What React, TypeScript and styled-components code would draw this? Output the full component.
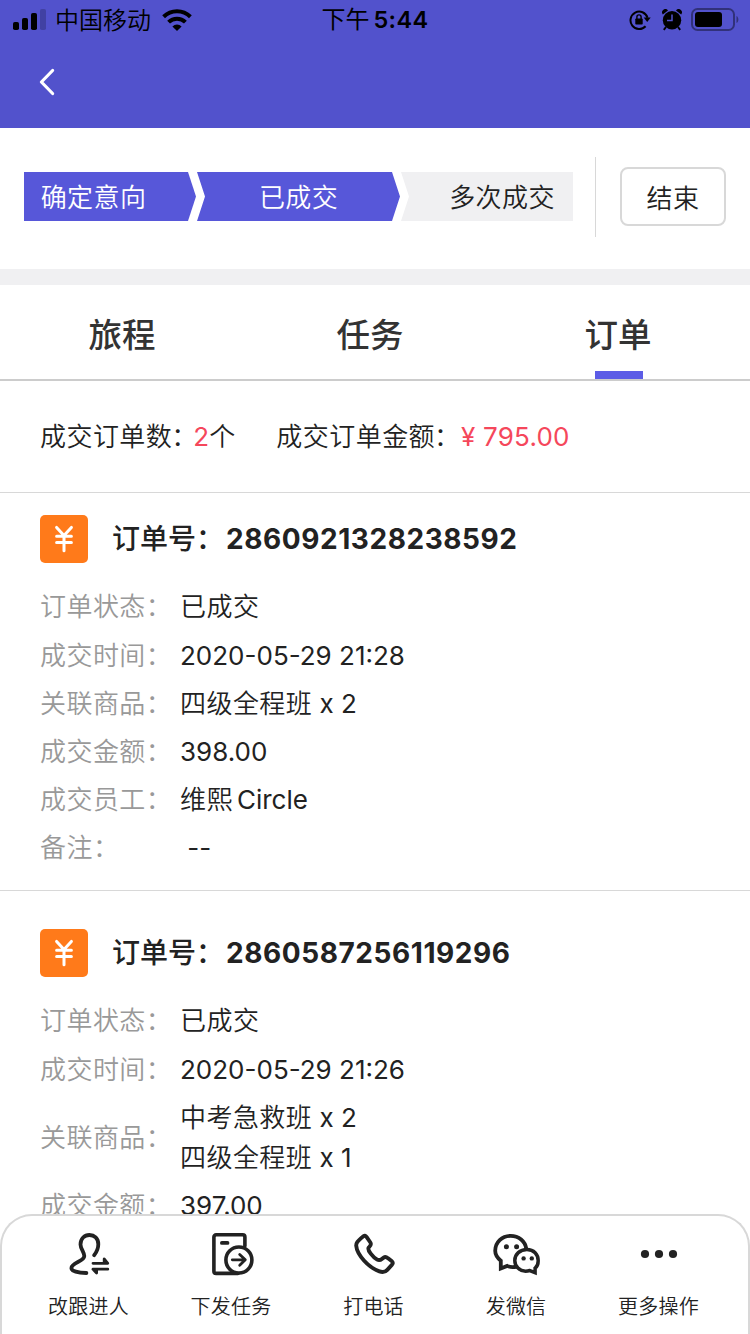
import React from 'react';
import styled, { createGlobalStyle, css } from 'styled-components';

const GlobalStyle = createGlobalStyle`
  * { box-sizing: border-box; }
  body {
    margin: 0;
    background: #fff;
    color: #222;
    font-family: Inter, 'Noto Sans CJK SC DemiLight', 'Noto Sans CJK SC', sans-serif;
    font-size: 26px;
    overflow: hidden;
  }
`;

const headingFont = css`
  font-family: Inter, 'Noto Sans CJK SC Medium', 'Noto Sans CJK SC', sans-serif;
  font-weight: 500;
`;

const Screen = styled.div`
  display: flex;
  flex-direction: column;
  width: 750px;
  height: 1334px;
  overflow: hidden;
`;

const Header = styled.header`
  height: 128px;
  flex: none;
  background: #5252cc;
`;

const StatusBar = styled.div`
  display: grid;
  grid-template-columns: 1fr auto 1fr;
  align-items: center;
  height: 40px;
  padding: 0 11px 0 13px;
  color: #000;
`;

const StatusGroup = styled.div<{ $end?: boolean }>`
  display: flex;
  align-items: center;
  justify-content: ${(p) => (p.$end ? 'flex-end' : 'flex-start')};
`;

const Carrier = styled.span`
  margin: 0 11px 0 9px;
  padding-top: 2px;
  font-size: 24px;
  line-height: 30px;
`;

const Clock = styled.span`
  margin-right: 2px;
  font-size: 23.5px;
  font-weight: 600;
  line-height: 30px;
  letter-spacing: 0.4px;
  white-space: nowrap;
`;

const ClockPrefix = styled.span`
  font-family: Inter, 'Noto Sans CJK SC', sans-serif;
  font-weight: 400;
  font-size: 24px;
  letter-spacing: 0;
  margin-right: 4px;
`;

const NavBar = styled.div`
  display: flex;
  align-items: center;
  height: 84px;
  padding-left: 38px;
`;

const Progress = styled.section`
  display: flex;
  flex: none;
  height: 141px;
  padding: 29px 24px 0;
`;

const Steps = styled.div`
  display: flex;
  width: 549px;
  height: 49px;
  margin-top: 15px;
`;

const stepShapes = {
  first: css`
    width: 172px;
    padding-right: 33px;
    clip-path: polygon(0 0, 164px 0, 100% 50%, 164px 100%, 0 100%);
  `,
  middle: css`
    width: 203px;
    margin-left: 1px;
    clip-path: polygon(0 0, 195px 0, 100% 50%, 195px 100%, 0 100%, 8px 50%);
  `,
  last: css`
    width: 172px;
    margin-left: 1px;
    padding-left: 30px;
    clip-path: polygon(0 0, 100% 0, 100% 100%, 0 100%, 8px 50%);
  `,
};

const Step = styled.div<{ $shape: keyof typeof stepShapes; $done?: boolean }>`
  display: flex;
  flex: none;
  align-items: center;
  justify-content: center;
  padding-bottom: 2px;
  background: ${(p) => (p.$done ? '#5757d9' : '#f0f0f2')};
  color: ${(p) => (p.$done ? '#fff' : '#222')};
  letter-spacing: 0.4px;
  ${(p) => stepShapes[p.$shape]}
`;

const StepDivider = styled.div`
  width: 1px;
  height: 80px;
  margin: 0 24px 0 22px;
  background: #d8d8d8;
`;

const EndButton = styled.button`
  width: 106px;
  height: 59px;
  margin-top: 10px;
  padding: 0;
  border: 2px solid #d8d8d8;
  border-radius: 8px;
  background: #fff;
  color: #222;
  font: inherit;
  letter-spacing: 0.5px;
`;

const Tabs = styled.nav`
  display: flex;
  flex: none;
  justify-content: space-between;
  height: 112px;
  padding: 0 84px 0 74px;
  border-top: 16px solid #f0f0f2;
  border-bottom: 2px solid #ccc;
`;

const Tab = styled.a<{ $active?: boolean }>`
  ${headingFont}
  display: flex;
  flex-direction: column;
  align-items: center;
  width: 96px;
  color: #333;
  font-size: 33.5px;
  line-height: 86px;
  white-space: nowrap;
  padding-top: 7px;

  &::after {
    content: '';
    width: 48px;
    height: 8px;
    margin: -7px 0 0 2px;
    flex: none;
    background: ${(p) => (p.$active ? '#5c5ce6' : 'transparent')};
  }
`;

const Summary = styled.div`
  display: flex;
  flex: none;
  gap: 41px;
  height: 112px;
  padding-left: 40px;
  border-bottom: 1px solid #d8d8d8;
  line-height: 111px;
`;

const Accent = styled.span`
  color: #f5475b;
  letter-spacing: 0.2px;
`;

const Han = styled.span<{ $spaced?: boolean }>`
  letter-spacing: 0.45px;
  margin-right: ${(p) => (p.$spaced ? 4 : 0)}px;
`;

const Colon = styled.span<{ $tight?: boolean }>`
  margin-left: -1px;
  margin-right: ${(p) => (p.$tight ? -4 : 1)}px;
`;

const Orders = styled.main`
  flex: 1;
  min-height: 0;
  overflow: hidden;
`;

const Order = styled.article<{ $top: number }>`
  padding: ${(p) => p.$top}px 40px 18px;
  border-bottom: 1px solid #d8d8d8;
`;

const OrderHeader = styled.header`
  ${headingFont}
  display: flex;
  align-items: center;
  height: 48px;
  margin-bottom: 20px;
  font-size: 28px;
`;

const OrderBadge = styled.span`
  display: flex;
  width: 48px;
  height: 48px;
  margin-right: 24px;
  border-radius: 5px;
  background: #ff7a1a;
`;

const OrderLabel = styled.span`
  width: 114px;
  padding-bottom: 4px;
  white-space: nowrap;
`;

const OrderNumber = styled.strong`
  padding-bottom: 1px;
  font-weight: 700;
  letter-spacing: 0.57px;
`;

const Row = styled.div`
  display: flex;
  align-items: center;
  padding: 4px 0;
  line-height: 40px;

  &:nth-child(2) { padding-bottom: 5px; }
`;

const RowLabel = styled.span`
  width: 140px;
  flex: none;
  color: #999;
`;

const RowValue = styled.div`
  white-space: pre-line;
`;

const ActionBar = styled.footer`
  display: flex;
  flex: none;
  justify-content: space-between;
  height: 120px;
  padding: 14px 18.5px 0 15.5px;
  border: 2px solid #d8d8d8;
  border-bottom: 0;
  border-radius: 32px 32px 0 0;
  background: #fff;
`;

const Action = styled.button`
  display: flex;
  flex-direction: column;
  align-items: center;
  width: 142px;
  padding: 0;
  border: 0;
  background: none;
  color: #222;
  font: inherit;
  font-size: 20px;
  line-height: 32px;
  letter-spacing: 0.2px;

  svg { margin-bottom: 13px; }
`;

const SignalIcon = () => (
  <svg width="33" height="22" viewBox="0 0 33 22">
    <rect x="0" y="13" width="6" height="8" rx="1.8" />
    <rect x="9" y="9" width="6" height="12" rx="1.8" />
    <rect x="18" y="4" width="6" height="17" rx="1.8" />
    <rect x="27" y="0" width="6" height="21" rx="1.8" opacity="0.2" />
  </svg>
);

const WifiIcon = () => (
  <svg width="30" height="22" viewBox="0 0 30 22">
    <g fill="none" stroke="#000" strokeWidth="4">
      <path d="M1.6 7.8a19.2 19.2 0 0 1 26.8 0" />
      <path d="M6.6 13.2a11.9 11.9 0 0 1 16.8 0" />
    </g>
    <path d="M15 22l-4.6-4.6a6.5 6.5 0 0 1 9.2 0z" />
  </svg>
);

const RotationLockIcon = () => (
  <svg width="22" height="22" viewBox="0 0 22 22">
    <path d="M16.6 17.2a8.7 8.7 0 1 1 1.9-8.5" fill="none" stroke="#000" strokeWidth="2" />
    <path d="M14.7 8.6h7L18.2 13z" />
    <rect x="6.3" y="9.4" width="7.4" height="6.2" rx="0.8" />
    <path d="M7.9 10V8a2.1 2.1 0 0 1 4.2 0v2" fill="none" stroke="#000" strokeWidth="1.4" />
  </svg>
);

const AlarmIcon = () => (
  <svg width="20" height="22" viewBox="0 0 20 22">
    <circle cx="10" cy="11.3" r="9.2" />
    <path d="M.8 5.4A3.2 3.2 0 0 1 6 1.4zM19.2 5.4A3.2 3.2 0 0 0 14 1.4z" />
    <path d="M4 18l-2.2 2.8M16 18l2.2 2.8" stroke="#000" strokeWidth="2" />
    <path d="M10 5.5v6H5" fill="none" stroke="#5252cc" strokeWidth="1.5" />
  </svg>
);

const BatteryIcon = () => (
  <svg width="48" height="24" viewBox="0 0 48 24">
    <rect x="1" y="1" width="42" height="21" rx="5.5" fill="none" stroke="#000" strokeOpacity="0.4" strokeWidth="2" />
    <rect x="4" y="4" width="27" height="15" rx="3" />
    <path d="M45.5 8c2.5 1 2.5 6 0 7z" opacity="0.4" />
  </svg>
);

const StatusIcons = styled(StatusGroup)`
  svg { flex: none; }
  svg + svg { margin-left: 11px; }
  svg:last-child { margin-left: 9px; }
`;

const BackIcon = () => (
  <svg width="18" height="28" viewBox="0 0 18 28" fill="none" stroke="#fff" strokeWidth="3.2" strokeLinecap="round" strokeLinejoin="round">
    <path d="M14.6 2.5L3.4 14l11.2 11.5" />
  </svg>
);

const YenIcon = () => (
  <svg width="48" height="48" viewBox="0 0 48 48" fill="none" stroke="#fff" strokeWidth="3" strokeLinecap="round" strokeLinejoin="round">
    <path d="M16.6 12.4l7.4 8.2 7.4-8.2M24 20.6v15.2M16.6 21.2h14.8M16.6 27.6h14.8" />
  </svg>
);

const iconProps = {
  width: 48,
  height: 48,
  viewBox: '0 0 48 48',
  fill: 'none',
  stroke: '#222',
  strokeWidth: 3.8,
  strokeLinecap: 'round' as const,
  strokeLinejoin: 'round' as const,
};

const TransferIcon = () => (
  <svg {...iconProps}>
    <path d="M29.2 25.2C31.6 22 33.3 18 33.3 14.2C33.3 8.4 29.3 5 24.4 5S15.5 8.6 15.5 14.4C15.5 18.5 19.3 22.5 19.3 26C19.3 31.5 6.4 32.6 6.4 38.2C6.4 41.2 13.5 42.9 21.4 43" />
    <path d="M28 33.3H42.8L39.2 28.9V33M42.8 39.2H28M31.6 39.2V43L28 39.2" strokeWidth="2.8" />
  </svg>
);

const TaskIcon = () => (
  <svg {...iconProps} strokeWidth={3.6}>
    <path d="M37.9 16V7a2.2 2.2 0 0 0-2.2-2.2H9.1A2.2 2.2 0 0 0 6.9 7v34.2a2.2 2.2 0 0 0 2.2 2.2H31" />
    <path d="M14.9 12.9h5.6" strokeWidth="3.8" />
    <circle cx="31.9" cy="30" r="13" fill="#fff" />
    <path d="M25.3 29.8h12M32.7 24.4l5.6 5.4-5.6 5.4" strokeWidth="2.8" />
  </svg>
);

const PhoneIcon = () => (
  <svg {...iconProps} strokeWidth={3.9}>
    <path d="M6.2 15.7C6.1 12.6 7.6 11.5 12.6 6.8C14.3 5.2 15.6 5.6 16.7 7.2L20.4 12.5C21.8 14.6 20.4 15.7 18.7 17.6C16.8 19.8 23.2 27.3 27.2 29.6C30.8 31.6 31.8 28.1 34.6 27.1C36.1 26.6 37.1 27.5 38.1 28.3L41.6 31C43.4 32.5 43 33.6 41.6 35.2L37.3 39.8C34.7 42.7 32.4 42.5 29.4 41.4C18.3 37.2 7 25 6.2 15.7Z" />
  </svg>
);

const WechatIcon = () => (
  <svg {...iconProps} strokeLinejoin="miter">
    <path d="M24.9 36.6c-3.3.7-6.8.7-9.7-.7L8.8 38.4V30.7C5.1 27.7 3.2 24 3.2 20.8C3.2 12.3 10 5.8 18.6 5.8C26.9 5.8 33.2 11.3 34.3 18.8" strokeLinecap="butt" />
    <path d="M43.1 38.2V42.6L37.8 40.5C36.3 41 35 41.2 33.5 41.2C27.6 41.2 22.8 36.5 22.8 30.4C22.8 24.3 28 19.5 34.9 19.5C41.8 19.5 46.2 24.3 46.2 30.7C46.2 33.9 45.5 36.4 43.1 38.2Z" fill="#fff" strokeWidth="3.5" />
    <g fill="#222" stroke="none">
      <circle cx="14.4" cy="16.8" r="2.5" />
      <circle cx="24.6" cy="16.8" r="2.5" />
      <circle cx="31.6" cy="28.4" r="2.2" />
      <circle cx="39.8" cy="28.4" r="2.2" />
    </g>
  </svg>
);

const MoreIcon = () => (
  <svg {...iconProps} fill="#222" stroke="none">
    <circle cx="10" cy="24" r="4.1" />
    <circle cx="24" cy="24" r="4.1" />
    <circle cx="38" cy="24" r="4.1" />
  </svg>
);

/* Sets Han characters slightly wider than the Latin text beside them. */
const Mixed = ({ text }: { text: string }) => {
  const parts = text.split(/([\u4e00-\u9fff]+)/).filter(Boolean);
  return (
    <>
      {parts.map((part, i) =>
        /[\u4e00-\u9fff]/.test(part) ? (
          <Han key={i} $spaced={/^[A-Za-z]/.test(parts[i + 1] ?? '')}>{part}</Han>
        ) : (
          part
        ),
      )}
    </>
  );
};

const orders = [
  {
    id: '2860921328238592',
    top: 22,
    rows: [
      ['订单状态', '已成交'],
      ['成交时间', '2020-05-29 21:28'],
      ['关联商品', '四级全程班 x 2'],
      ['成交金额', '398.00'],
      ['成交员工', '维熙Circle'],
      ['备注', '\u00a0--'],
    ],
  },
  {
    id: '2860587256119296',
    top: 38,
    rows: [
      ['订单状态', '已成交'],
      ['成交时间', '2020-05-29 21:26'],
      ['关联商品', '中考急救班 x 2\n四级全程班 x 1'],
      ['成交金额', '397.00'],
    ],
  },
];

const actions = [
  { label: '改跟进人', Icon: TransferIcon },
  { label: '下发任务', Icon: TaskIcon },
  { label: '打电话', Icon: PhoneIcon },
  { label: '发微信', Icon: WechatIcon },
  { label: '更多操作', Icon: MoreIcon },
];

export default function App() {
  return (
    <>
      <GlobalStyle />
      <Screen>
        <Header>
          <StatusBar>
            <StatusGroup>
              <SignalIcon />
              <Carrier>中国移动</Carrier>
              <WifiIcon />
            </StatusGroup>
            <Clock>
              <ClockPrefix>下午</ClockPrefix>5:44
            </Clock>
            <StatusIcons $end>
              <RotationLockIcon />
              <AlarmIcon />
              <BatteryIcon />
            </StatusIcons>
          </StatusBar>
          <NavBar>
            <BackIcon />
          </NavBar>
        </Header>
        <Progress>
          <Steps>
            <Step $shape="first" $done>确定意向</Step>
            <Step $shape="middle" $done>已成交</Step>
            <Step $shape="last">多次成交</Step>
          </Steps>
          <StepDivider />
          <EndButton>结束</EndButton>
        </Progress>
        <Tabs>
          <Tab>旅程</Tab>
          <Tab>任务</Tab>
          <Tab $active>订单</Tab>
        </Tabs>
        <Summary>
          <span>
            <Han>成交订单数</Han><Colon $tight>：</Colon><Accent>2</Accent>个
          </span>
          <span>
            <Han>成交订单金额</Han><Colon>：</Colon><Accent>¥ 795.00</Accent>
          </span>
        </Summary>
        <Orders>
          {orders.map((order) => (
            <Order key={order.id} $top={order.top}>
              <OrderHeader>
                <OrderBadge><YenIcon /></OrderBadge>
                <OrderLabel>订单号：</OrderLabel>
                <OrderNumber>{order.id}</OrderNumber>
              </OrderHeader>
              {order.rows.map(([label, value]) => (
                <Row key={label}>
                  <RowLabel><Han>{label}</Han>：</RowLabel>
                  <RowValue><Mixed text={value} /></RowValue>
                </Row>
              ))}
            </Order>
          ))}
        </Orders>
        <ActionBar>
          {actions.map(({ label, Icon }) => (
            <Action key={label}>
              <Icon />
              {label}
            </Action>
          ))}
        </ActionBar>
      </Screen>
    </>
  );
}
